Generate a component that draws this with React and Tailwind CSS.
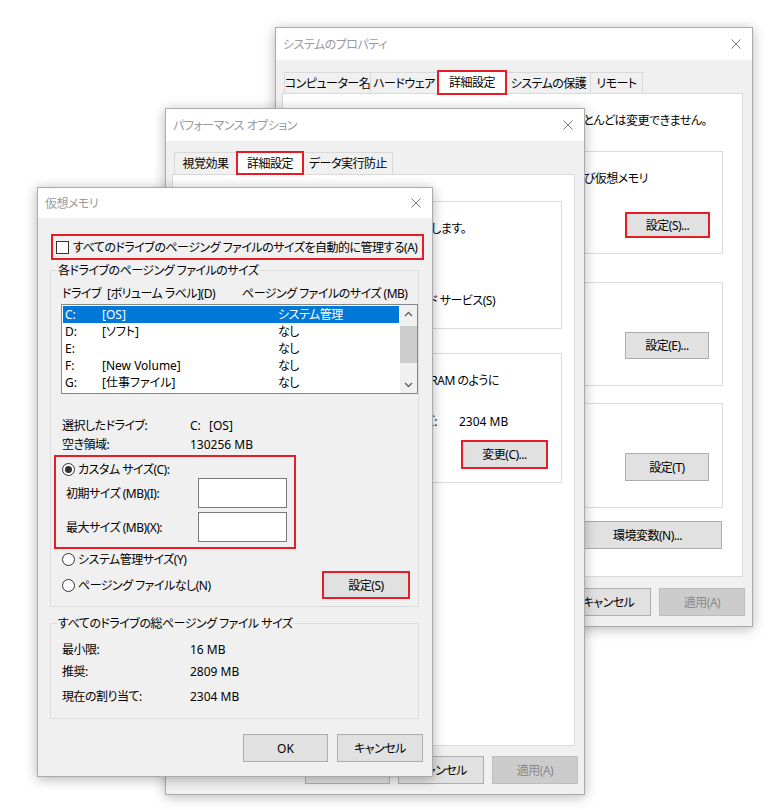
import React from 'react';

const FONT =
  "font-['Noto_Sans','Noto_Sans_CJK_JP',sans-serif] [font-feature-settings:'palt'] tracking-[-0.5px] text-[12px] leading-[17px] text-black";

const LATIN = 'tracking-[0px]';

function CloseX() {
  return (
    <svg width="10" height="10" viewBox="0 0 10 10" className="shrink-0">
      <path d="M0.5 0.5 L9.5 9.5 M9.5 0.5 L0.5 9.5" stroke="#7a7a7a" strokeWidth="1" fill="none" />
    </svg>
  );
}

function TitleBar({ title, h }) {
  return (
    <div className={`flex items-center justify-between bg-white shrink-0 pl-[7px] pr-[11px] text-[#9a9a9a] ${h}`}>
      <span className="whitespace-nowrap">{title}</span>
      <CloseX />
    </div>
  );
}

function Btn({ children, className = '', red = false, disabled = false }) {
  const border = red
    ? 'border-2 border-[#e81c24]'
    : disabled
    ? 'border border-[#bfbfbf]'
    : 'border border-[#adadad]';
  const bg = disabled ? 'bg-[#cccccc] text-[#8a8a8a]' : 'bg-[#e1e1e1]';
  return (
    <div className={`flex items-center justify-center shrink-0 whitespace-nowrap ${border} ${bg} ${className}`}>
      {children}
    </div>
  );
}

function Group({ label, labelBg = 'bg-white', className = '', children }) {
  return (
    <div className={`relative border border-[#dcdcdc] shrink-0 flex flex-col ${className}`}>
      {label && (
        <span className={`absolute -top-[9px] left-[6px] px-[1px] whitespace-nowrap ${labelBg}`}>{label}</span>
      )}
      {children}
    </div>
  );
}

function Radio({ checked }) {
  return (
    <span className="flex items-center justify-center w-[13px] h-[13px] rounded-full border border-[#333333] bg-white shrink-0">
      {checked && <span className="w-[7px] h-[7px] rounded-full bg-[#333333]" />}
    </span>
  );
}

function Chevron({ up }) {
  return (
    <svg width="9" height="6" viewBox="0 0 9 6">
      <path
        d={up ? 'M1 5 L4.5 1.5 L8 5' : 'M1 1 L4.5 4.5 L8 1'}
        stroke="#606060"
        strokeWidth="1.4"
        fill="none"
      />
    </svg>
  );
}

function SystemProps() {
  return (
    <div className="absolute left-[275px] top-[27px] w-[478px] h-[600px] flex flex-col bg-[#f0f0f0] border border-[#aaaaaa] shadow-[0_2px_12px_rgba(0,0,0,0.28)]">
      <TitleBar title="システムのプロパティ" h="h-[32px]" />
      <div className="flex items-end h-[21px] mt-[12px] ml-[8px] shrink-0">
        <div className="flex items-center justify-center h-[21px] w-[87px] border border-b-0 border-[#d9d9d9] whitespace-nowrap">
          コンピューター名
        </div>
        <div className="flex items-center justify-center h-[21px] w-[68px] -ml-px border border-b-0 border-[#d9d9d9] whitespace-nowrap">
          ハードウェア
        </div>
        <div className="relative z-10 flex items-center justify-center h-[25px] w-[70px] -ml-px -mb-[2px] bg-white border-2 border-[#e81c24] whitespace-nowrap">
          詳細設定
        </div>
        <div className="flex items-center justify-center h-[21px] w-[85px] -ml-px border border-b-0 border-[#d9d9d9] whitespace-nowrap">
          システムの保護
        </div>
        <div className="flex items-center justify-center h-[21px] w-[53px] -ml-px border border-b-0 border-[#d9d9d9] whitespace-nowrap">
          リモート
        </div>
      </div>
      <div className="ml-[6px] w-[461px] h-[484px] shrink-0 bg-white border border-[#d9d9d9] flex flex-col pt-[18px]">
        <div className="flex justify-end pr-[35px] whitespace-nowrap">
          Administrator としてログオンしない限り、変更のほとんどは変更できません。
        </div>
        <div className="flex flex-col ml-[10px] mr-[19px]">
          <Group label="パフォーマンス" className="mt-[22px] h-[103px] pt-[18px]">
            <div className="flex justify-end pr-[74px] whitespace-nowrap">
              視覚効果、プロセッサのスケジュール、メモリ使用、および仮想メモリ
            </div>
            <Btn red className="self-end mr-[12px] mt-[25px] w-[85px] h-[26px]">
              設定(S)...
            </Btn>
          </Group>
          <Group label="ユーザー プロファイル" className="mt-[28px] h-[104px] pt-[18px]">
            <div className="pl-[10px] whitespace-nowrap">サインインに関連するデスクトップの設定</div>
            <Btn className="self-end mr-[13px] mt-[14px] w-[84px] h-[27px]">設定(E)...</Btn>
          </Group>
          <Group label="起動と回復" className="mt-[17px] h-[105px] pt-[18px]">
            <div className="pl-[10px] whitespace-nowrap">システム起動、システム障害およびデバッグ情報</div>
            <Btn className="self-end mr-[13px] mt-[14px] w-[84px] h-[28px]">設定(T)</Btn>
          </Group>
          <Btn className="self-end mr-[1px] mt-[13px] w-[149px] h-[28px]">環境変数(N)...</Btn>
        </div>
      </div>
      <div className="flex justify-end gap-[8px] pr-[7px] mt-[11px]">
        <Btn className={`w-[85px] h-[28px] ${LATIN}`}>OK</Btn>
        <Btn className="w-[85px] h-[28px]">キャンセル</Btn>
        <Btn disabled className="w-[86px] h-[28px]">
          適用(A)
        </Btn>
      </div>
    </div>
  );
}

function PerfOptions() {
  return (
    <div className="absolute left-[165px] top-[108px] w-[420px] h-[687px] flex flex-col bg-[#f0f0f0] border border-[#aaaaaa] shadow-[0_2px_12px_rgba(0,0,0,0.28)]">
      <TitleBar title="パフォーマンス オプション" h="h-[32px]" />
      <div className="flex items-end h-[22px] mt-[11px] ml-[8px] shrink-0">
        <div className="flex items-center justify-center h-[22px] w-[63px] border border-b-0 border-[#d9d9d9] whitespace-nowrap">
          視覚効果
        </div>
        <div className="relative z-10 flex items-center justify-center h-[24px] w-[68px] -ml-px -mb-px bg-white border-2 border-[#e81c24] whitespace-nowrap">
          詳細設定
        </div>
        <div className="flex items-center justify-center h-[22px] w-[90px] -ml-px border border-b-0 border-[#d9d9d9] whitespace-nowrap">
          データ実行防止
        </div>
      </div>
      <div className="ml-[6px] w-[403px] h-[572px] shrink-0 bg-white border border-[#d9d9d9] flex flex-col">
        <Group label="プロセッサのスケジュール" className="mt-[26px] mx-[12px] h-[128px] pt-[18px]">
          <div className="flex justify-end pr-[95px] whitespace-nowrap">
            プロセッサ リソースの割り当て方法を選択します。
          </div>
          <div className="pl-[10px] mt-[17px] whitespace-nowrap">最適なパフォーマンスを調整する対象:</div>
          <div className="flex items-center justify-end pr-[66px] mt-[21px] h-[17px] whitespace-nowrap">
            <Radio checked />
            <span className="ml-[4px]">プログラム(P)</span>
            <span className="ml-[40px]">
              <Radio />
            </span>
            <span className="ml-[4px]">バックグラウンド サービス(S)</span>
          </div>
        </Group>
        <Group label="仮想メモリ" className="mt-[24px] mx-[12px] h-[130px] pt-[18px]">
          <div className="flex justify-end pr-[62px] whitespace-nowrap">
            ページング ファイルは、Windows が RAM のように
          </div>
          <div className="pl-[10px] whitespace-nowrap">使用するハード ディスク上の領域です。</div>
          <div className="flex justify-end pr-[42px] mt-[7px] whitespace-nowrap">
            <span>すべてのドライブの総ページング ファイル サイズ:</span>
            <span className={`ml-[22px] w-[60px] ${LATIN}`}>2304 MB</span>
          </div>
          <Btn red className="self-end mr-[13px] mt-[10px] w-[87px] h-[29px]">
            変更(C)...
          </Btn>
        </Group>
      </div>
      <div className="flex justify-end gap-[8px] pr-[6px] mt-[10px]">
        <Btn className={`w-[85px] h-[28px] ${LATIN}`}>OK</Btn>
        <Btn className="w-[86px] h-[28px]">キャンセル</Btn>
        <Btn disabled className="w-[86px] h-[28px]">
          適用(A)
        </Btn>
      </div>
    </div>
  );
}

const drives = [
  { d: 'C:', l: '[OS]', s: 'システム管理', sel: true },
  { d: 'D:', l: '[ソフト]', s: 'なし' },
  { d: 'E:', l: '', s: 'なし' },
  { d: 'F:', l: '[New Volume]', s: 'なし' },
  { d: 'G:', l: '[仕事ファイル]', s: 'なし' },
];

function VirtualMemory() {
  return (
    <div className="absolute left-[37px] top-[187px] w-[396px] h-[590px] flex flex-col bg-[#f0f0f0] border border-[#aaaaaa] shadow-[0_2px_12px_rgba(0,0,0,0.3)]">
      <TitleBar title="仮想メモリ" h="h-[30px]" />
      <div className="mt-[16px] ml-[13px] w-[373px] h-[26px] shrink-0 border-2 border-[#e81c24] flex items-center pl-[3px] whitespace-nowrap">
        <span className="w-[13px] h-[13px] border border-[#333333] bg-white shrink-0" />
        <span className="ml-[4px]">すべてのドライブのページング ファイルのサイズを自動的に管理する(A)</span>
      </div>

      <Group
        label="各ドライブのページング ファイルのサイズ"
        labelBg="bg-[#f0f0f0]"
        className="mt-[10px] ml-[12px] w-[369px] h-[337px]"
      >
        <div className="flex mt-[14px] h-[17px] pl-[11px] whitespace-nowrap">
          <span className="w-[45px]">ドライブ</span>
          <span className="w-[135px]">[ボリューム ラベル](D)</span>
          <span>ページング ファイルのサイズ (MB)</span>
        </div>
        <div className="mt-[2px] ml-[10px] w-[357px] h-[90px] shrink-0 border border-[#828790] bg-white flex">
          <div className="flex-1 flex flex-col pt-px pl-px pr-px">
            {drives.map((r) => (
              <div
                key={r.d}
                className={`flex items-center h-[17px] whitespace-nowrap ${r.sel ? 'bg-[#0078d7] text-white' : ''}`}
              >
                <span className={`pl-[2px] w-[39px] ${LATIN}`}>{r.d}</span>
                <span className={`w-[176px] ${LATIN}`}>{r.l}</span>
                <span>{r.s}</span>
              </div>
            ))}
          </div>
          <div className="w-[17px] flex flex-col bg-[#f0f0f0]">
            <div className="h-[17px] flex items-center justify-center">
              <Chevron up />
            </div>
            <div className="mt-[4px] h-[37px] bg-[#cdcdcd]" />
            <div className="flex-1" />
            <div className="h-[17px] flex items-center justify-center">
              <Chevron />
            </div>
          </div>
        </div>

        <div className="flex mt-[23px] h-[17px] pl-[11px] whitespace-nowrap">
          <span className="w-[128px]">選択したドライブ:</span>
          <span className={`w-[19px] ${LATIN}`}>C:</span>
          <span className={LATIN}>[OS]</span>
        </div>
        <div className="flex mt-[2px] h-[17px] pl-[11px] whitespace-nowrap">
          <span className="w-[128px]">空き領域:</span>
          <span className={LATIN}>130256 MB</span>
        </div>

        <div className="mt-[2px] ml-[3px] w-[242px] h-[94px] shrink-0 border-2 border-[#e81c24] flex flex-col">
          <div className="flex items-center mt-[4px] h-[17px] pl-[6px] whitespace-nowrap">
            <Radio checked />
            <span className="ml-[3px]">カスタム サイズ(C):</span>
          </div>
          <div className="flex items-center h-[30px] pl-[10px] whitespace-nowrap">
            <span className="w-[132px]">初期サイズ (MB)(I):</span>
            <span className="w-[89px] h-[30px] border border-[#7a7a7a] bg-white" />
          </div>
          <div className="flex items-center mt-[4px] h-[30px] pl-[10px] whitespace-nowrap">
            <span className="w-[132px]">最大サイズ (MB)(X):</span>
            <span className="w-[89px] h-[30px] border border-[#7a7a7a] bg-white" />
          </div>
        </div>

        <div className="flex items-center mt-[2px] h-[17px] pl-[11px] whitespace-nowrap">
          <Radio />
          <span className="ml-[3px]">システム管理サイズ(Y)</span>
        </div>
        <div className="flex items-center justify-between mt-[3px] h-[28px] pl-[11px] pr-[8px] whitespace-nowrap">
          <div className="flex items-center">
            <Radio />
            <span className="ml-[3px]">ページング ファイルなし(N)</span>
          </div>
          <Btn red className="w-[88px] h-[28px]">
            設定(S)
          </Btn>
        </div>
      </Group>

      <Group
        label="すべてのドライブの総ページング ファイル サイズ"
        labelBg="bg-[#f0f0f0]"
        className="mt-[16px] ml-[12px] w-[369px] h-[96px]"
      >
        <div className="flex mt-[17px] h-[17px] pl-[11px] whitespace-nowrap">
          <span className="w-[128px]">最小限:</span>
          <span className={LATIN}>16 MB</span>
        </div>
        <div className="flex mt-[5px] h-[17px] pl-[11px] whitespace-nowrap">
          <span className="w-[128px]">推奨:</span>
          <span className={LATIN}>2809 MB</span>
        </div>
        <div className="flex mt-[8px] h-[17px] pl-[11px] whitespace-nowrap">
          <span className="w-[128px]">現在の割り当て:</span>
          <span className={LATIN}>2304 MB</span>
        </div>
      </Group>

      <div className="flex justify-end gap-[9px] pr-[9px] mt-[15px]">
        <Btn className={`w-[85px] h-[28px] ${LATIN}`}>OK</Btn>
        <Btn className="w-[86px] h-[28px]">キャンセル</Btn>
      </div>
    </div>
  );
}

export default function App() {
  return (
    <div className={`relative w-[772px] h-[810px] bg-white overflow-hidden ${FONT}`}>
      <SystemProps />
      <PerfOptions />
      <VirtualMemory />
    </div>
  );
}
